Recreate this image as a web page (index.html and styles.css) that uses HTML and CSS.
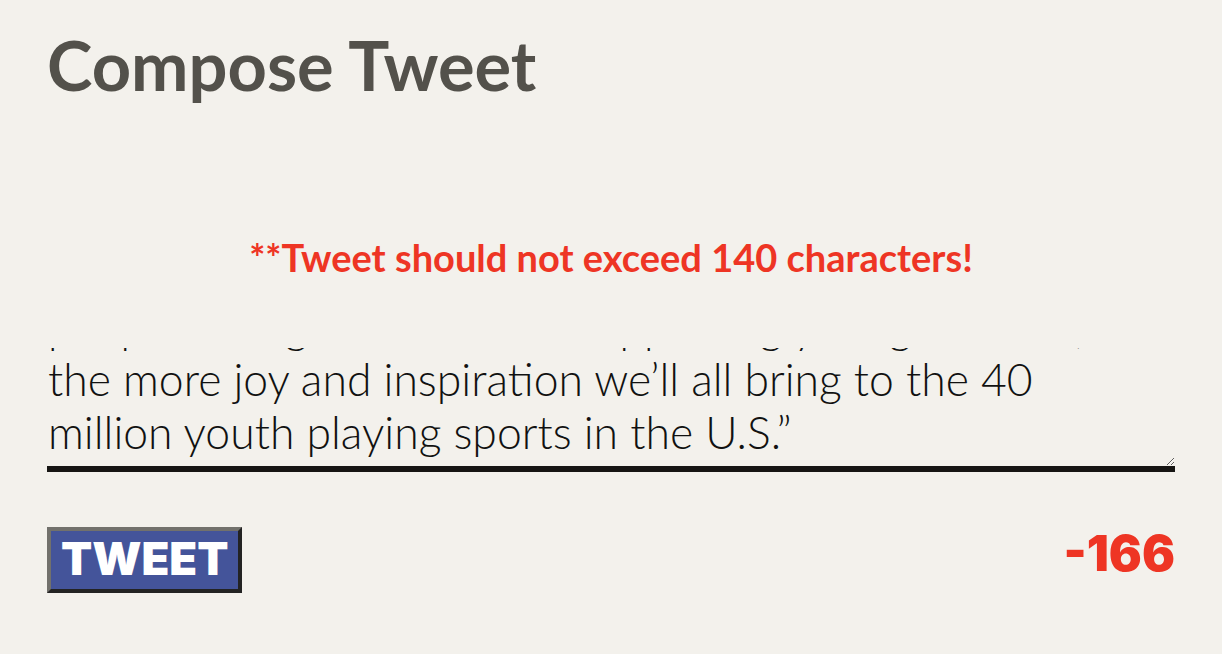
FILE: index.html
```html
<!DOCTYPE html>
<html lang="en">
<head>
<meta charset="utf-8">
<title>Compose Tweet</title>
<link rel="stylesheet" href="styles.css">
</head>
<body>
<main class="composer">
  <h1 class="title">Compose Tweet</h1>
  <p class="warning">**Tweet should not exceed 140 characters!</p>
  <textarea class="tweet-input" id="tweet" spellcheck="false">So proud to team up with the Youth Sports Alliance this season! As our coach put it: “The more
people who get involved in supporting young athletes,
the more joy and inspiration we’ll all bring to the 40 million youth playing sports in the U.S.”</textarea>
  <div class="actions">
    <button class="tweet-btn" type="button">TWEET</button>
    <span class="counter">-166</span>
  </div>
</main>
<script src="app.js"></script>
</body>
</html>
```
FILE: styles.css
```css
html, body {
  margin: 0;
  padding: 0;
  background: #f3f1ec;
}
body {
  font-family: "Lato", "Liberation Sans", sans-serif;
}
.composer {
  padding: 31px 47px 0 47px;
  display: flex;
  flex-direction: column;
}
.title {
  margin: 0;
  font-size: 68.6px;
  line-height: 1;
  font-weight: 700;
  color: #53514b;
}
.warning {
  margin: 138px 0 0 0;
  text-align: center;
  font-size: 38px;
  line-height: 1;
  font-weight: 700;
  color: #ee3524;
}
.tweet-input {
  margin: 72px 0 0 0;
  box-sizing: border-box;
  width: 100%;
  height: 124px;
  padding: 0 80px 7.5px 1px;
  border: none;
  border-bottom: 6px solid #161513;
  background: transparent;
  font-family: "Lato", "Liberation Sans", sans-serif;
  font-weight: 300;
  font-size: 44.5px;
  line-height: 52.8px;
  color: #111;
  overflow: hidden;
  resize: vertical;
  outline: none;
  display: block;
}
.actions {
  margin-top: 55px;
  display: flex;
  justify-content: space-between;
  align-items: flex-start;
}
.tweet-btn {
  margin: 0;
  padding: 5px 10px 7.5px;
  border: 4px solid;
  border-color: #72716c #232323 #232323 #72716c;
  background: #44549a;
  color: #fff;
  font-family: "Inter", "Lato", sans-serif;
  font-weight: 900;
  font-size: 45.5px;
  line-height: 1;
  cursor: pointer;
}
.counter {
  margin-top: 2px;
  font-family: "Inter", "Lato", sans-serif;
  font-weight: 900;
  font-size: 49px;
  line-height: 1;
  color: #ee3524;
}
```
FILE: app.js
```js
const t = document.getElementById('tweet');
t.scrollTop = t.scrollHeight;
```
